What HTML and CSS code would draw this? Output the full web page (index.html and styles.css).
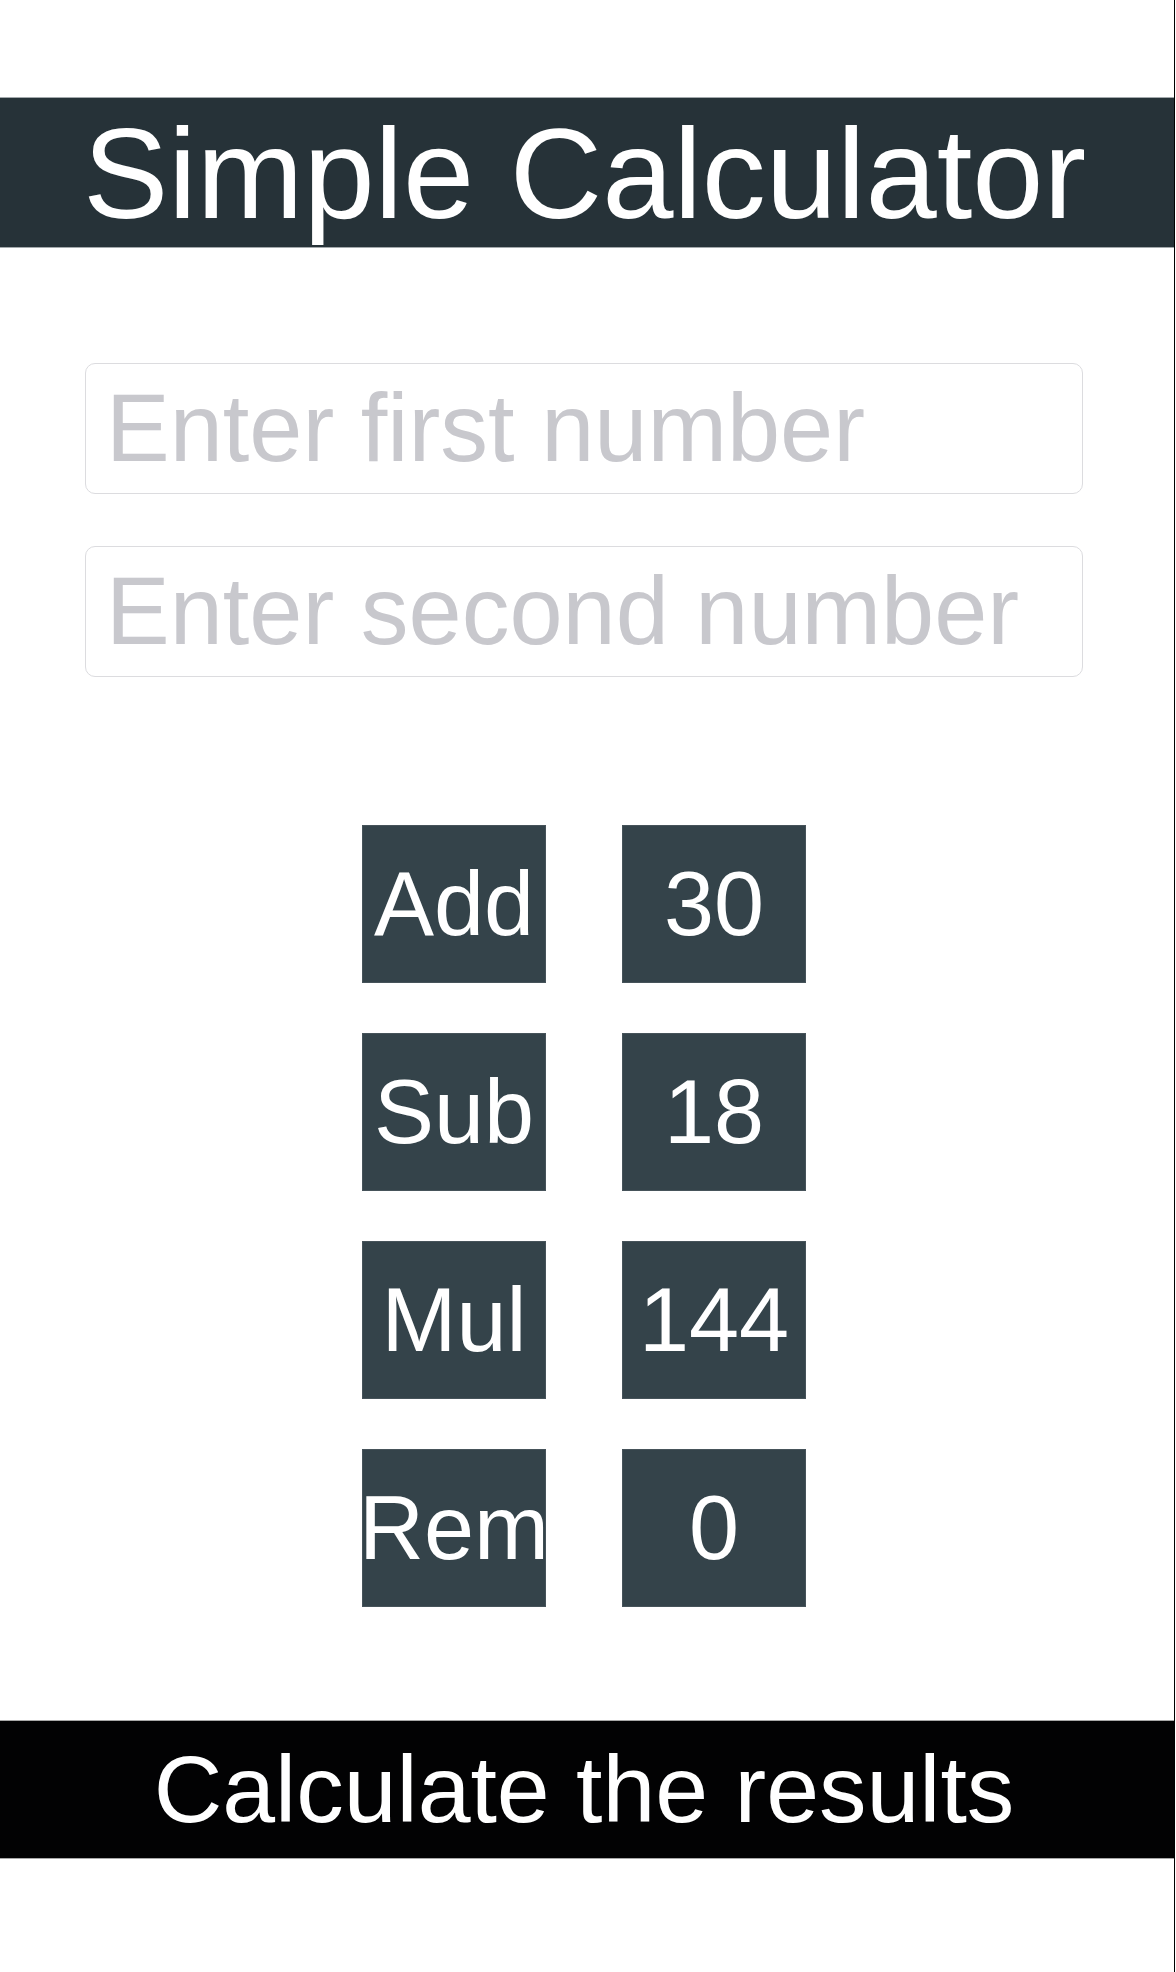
FILE: index.html
```html
<!DOCTYPE html>
<html lang="en">
<head>
<meta charset="utf-8">
<title>Simple Calculator</title>
<link rel="stylesheet" href="styles.css">
</head>
<body>
<div class="page">
  <header class="title-bar">
    <h1 class="title">Simple Calculator</h1>
  </header>

  <div class="inputs">
    <input class="num-input" type="text" placeholder="Enter first number">
    <input class="num-input" type="text" placeholder="Enter second number">
  </div>

  <div class="ops">
    <button class="op-btn">Add</button>
    <div class="op-result">30</div>
    <button class="op-btn">Sub</button>
    <div class="op-result">18</div>
    <button class="op-btn">Mul</button>
    <div class="op-result">144</div>
    <button class="op-btn">Rem</button>
    <div class="op-result">0</div>
  </div>

  <button class="calc-bar">Calculate the results</button>
</div>
</body>
</html>
```

FILE: styles.css
```css
html, body {
  margin: 0;
  padding: 0;
  background: #ffffff;
}

body {
  font-family: "Liberation Sans", Arial, Helvetica, sans-serif;
}

.page {
  width: 1175px;
  min-height: 1972px;
  border-right: 1px solid #000000;
  padding-top: 97px;
  box-sizing: border-box;
  display: flex;
  flex-direction: column;
}

.title-bar {
  height: 151px;
  box-sizing: border-box;
  background: #263238;
  border-top: 1px solid #a3a9ac;
  border-bottom: 1px solid #a3a9ac;
  display: flex;
  align-items: center;
  justify-content: center;
  padding-top: 3px;
}

.title {
  margin: 0;
  font-weight: normal;
  font-size: 128px;
  line-height: 1.1;
  color: #ffffff;
  white-space: nowrap;
  margin-left: -5px;
}

.inputs {
  margin-top: 115px;
  margin-left: 85px;
  width: 998px;
  display: flex;
  flex-direction: column;
  gap: 52px;
}

.num-input {
  height: 131px;
  box-sizing: border-box;
  border: 1px solid #dcdcdf;
  border-radius: 10px;
  padding: 0 0 0 20px;
  font-family: "Liberation Sans", Arial, Helvetica, sans-serif;
  font-size: 95.5px;
  color: #222;
  background: #ffffff;
  outline: none;
}

.num-input::placeholder {
  color: #c8c8cd;
}

.ops {
  margin-top: 148px;
  margin-left: 362px;
  display: grid;
  grid-template-columns: 184px 184px;
  grid-auto-rows: 158px;
  column-gap: 76px;
  row-gap: 50px;
}

.op-btn,
.op-result {
  background: #34434a;
  color: #ffffff;
  border: none;
  margin: 0;
  padding: 0;
  font-family: "Liberation Sans", Arial, Helvetica, sans-serif;
  font-size: 90px;
  line-height: 1;
  display: flex;
  align-items: center;
  justify-content: center;
  white-space: nowrap;
  overflow: visible;
  box-shadow: inset 0 0 0 1px #46535a;
}

.calc-bar {
  margin-top: 113px;
  height: 139px;
  width: 100%;
  box-sizing: border-box;
  background: #020203;
  color: #ffffff;
  border: none;
  border-top: 1px solid #a8a8a8;
  border-bottom: 1px solid #a8a8a8;
  font-family: "Liberation Sans", Arial, Helvetica, sans-serif;
  font-size: 95px;
  line-height: 1;
  padding: 0 6px 0 0;
  display: flex;
  align-items: center;
  justify-content: center;
  white-space: nowrap;
}
```
